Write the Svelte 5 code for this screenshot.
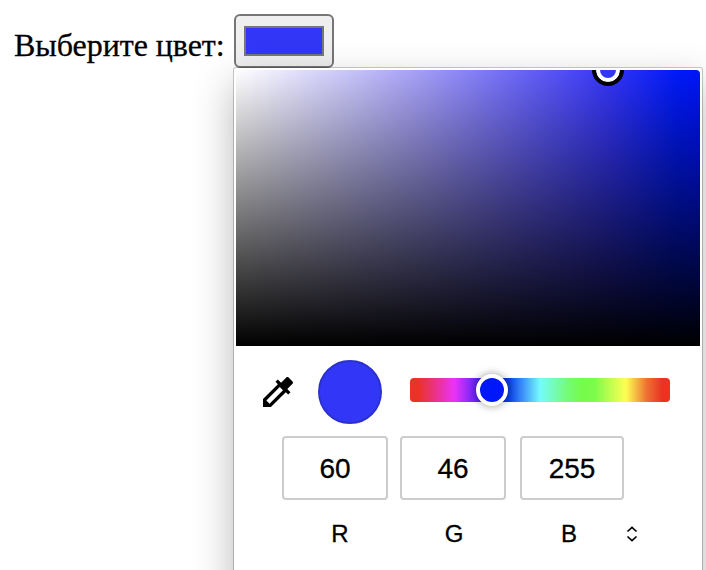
<script>
  const channels = [
    { name: 'R', value: 60, width: 106, gap: 12, labelX: 58 },
    { name: 'G', value: 46, width: 106, gap: 14, labelX: 54 },
    { name: 'B', value: 255, width: 104, gap: 0, labelX: 49 }
  ];
</script>

<main>
  <div class="field">
    <span class="caption">Выберите цвет:</span>
    <button class="swatch" aria-label="Выберите цвет"><span></span></button>
  </div>

  <section class="popup">
    <div class="area"><div class="ring"></div></div>

    <div class="tools">
      <svg class="dropper" viewBox="0 0 24 24" width="40" height="40">
        <path d="M20.71 5.63l-2.34-2.34c-.39-.39-1.02-.39-1.41 0l-3.12 3.12-1.93-1.91-1.41 1.41 1.42 1.42L3 16.25V21h4.75l8.92-8.92 1.42 1.42 1.41-1.41-1.92-1.92 3.12-3.12c.4-.4.4-1.03.01-1.42zM6.92 19L5 17.08l8.06-8.06 1.92 1.92L6.92 19z" />
      </svg>
      <div class="current"></div>
      <div class="hue"><div class="thumb"></div></div>
    </div>

    <div class="channels">
      {#each channels as c}
        <div class="channel" style="width: {c.width}px; margin-right: {c.gap}px">
          <div class="value">{c.value}</div>
          <div class="name" style="width: {c.labelX * 2}px">{c.name}</div>
        </div>
      {/each}
      <svg class="arrows" width="12" height="18" viewBox="0 0 12 18">
        <path d="M1.5 6.500 6 2.300l4.500 4.200M1.500 11.500 6 15.700l4.500-4.200" />
      </svg>
    </div>
  </section>
</main>

<style>
  :global(body) {
    background: #fff;
    overflow: hidden;
  }
  main {
    box-sizing: border-box;
    width: 706px;
    height: 570px;
    padding-top: 14px;
    overflow: hidden;
    color: #000;
  }
  .field {
    display: flex;
    height: 54px;
    padding-left: 14px;
  }
  .caption {
    width: 220px;
    padding-top: 13px;
    font: 32px/37px "Liberation Serif", "Times New Roman", serif;
    letter-spacing: -0.05px;
    -webkit-text-stroke: 0.3px #000;
    white-space: nowrap;
  }
  .swatch {
    display: flex;
    box-sizing: border-box;
    width: 100px;
    height: 54px;
    margin: 0;
    padding: 10px 8px;
    border: 2px solid #767676;
    border-radius: 6px;
    background: #efefef;
  }
  .swatch span {
    flex: 1;
    border: 2px solid #777;
    background: #3237f7;
  }
  .popup {
    position: relative;
    box-sizing: border-box;
    width: 468px;
    height: 540px;
    margin-left: 234px;
    padding: 2px 2px 0;
    border-radius: 2px 2px 0 0;
    background: #fff;
    box-shadow: 0 0 0 1px rgba(0, 0, 0, 0.2), 0 16px 42px rgba(0, 0, 0, 0.29);
  }
  .area {
    position: relative;
    height: 276px;
    overflow: hidden;
    border-radius: 4px 4px 0 0;
    background: linear-gradient(to top, #000, transparent),
      linear-gradient(to right, #fff 0%, #d2cffb 20%, #a29df6 40%, #6d68f6 60%, #3636f6 80%, #001af8 95%, #0014fa 100%);
  }
  .ring {
    position: absolute;
    box-sizing: border-box;
    left: 356px;
    top: -16px;
    width: 32px;
    height: 32px;
    border: 4px solid #000;
    border-radius: 50%;
    background: #3237f7;
    box-shadow: inset 0 0 0 4px #fff;
  }
  .tools {
    display: flex;
    align-items: center;
    height: 64px;
    padding: 14px 0 0 22px;
  }
  .current {
    box-sizing: border-box;
    width: 64px;
    height: 64px;
    margin-left: 20px;
    border: 2px solid #2c31ce;
    border-radius: 50%;
    background: #3237f7;
  }
  .hue {
    display: flex;
    align-items: center;
    width: 260px;
    height: 24px;
    margin: -4px 0 0 28px;
    border-radius: 4px;
    background: linear-gradient(to right, #eb3223 0%, #eb3223 3%, #ea33f7 17%, #0018f9 32%, #0a40e8 38%, #3a8bf8 43%, #75fbfd 50%, #75fb7c 60%, #75fb4c 66%, #7dfb4c 71%, #ffff54 83%, #ed7233 91%, #eb3223 97%, #eb3223 100%);
  }
  .thumb {
    box-sizing: border-box;
    width: 32px;
    height: 32px;
    margin-left: 66px;
    border: 4px solid #fff;
    border-radius: 50%;
    background: #0018f9;
    box-shadow: 0 0 8px rgba(0, 0, 0, 0.4);
  }
  .channels {
    display: flex;
    padding: 12px 0 0 46px;
    font-family: "Liberation Sans", Arial, sans-serif;
    -webkit-text-stroke: 0.3px #000;
    text-align: center;
  }
  .value {
    box-sizing: border-box;
    height: 64px;
    border: 2px solid #ccc;
    border-radius: 4px;
    font-size: 28px;
    line-height: 61px;
  }
  .name {
    margin-top: 20px;
    font-size: 24px;
    line-height: 28px;
  }
  .arrows {
    margin: 89px 0 0 2px;
    fill: none;
    stroke: #000;
    stroke-width: 1.7;
  }
</style>
